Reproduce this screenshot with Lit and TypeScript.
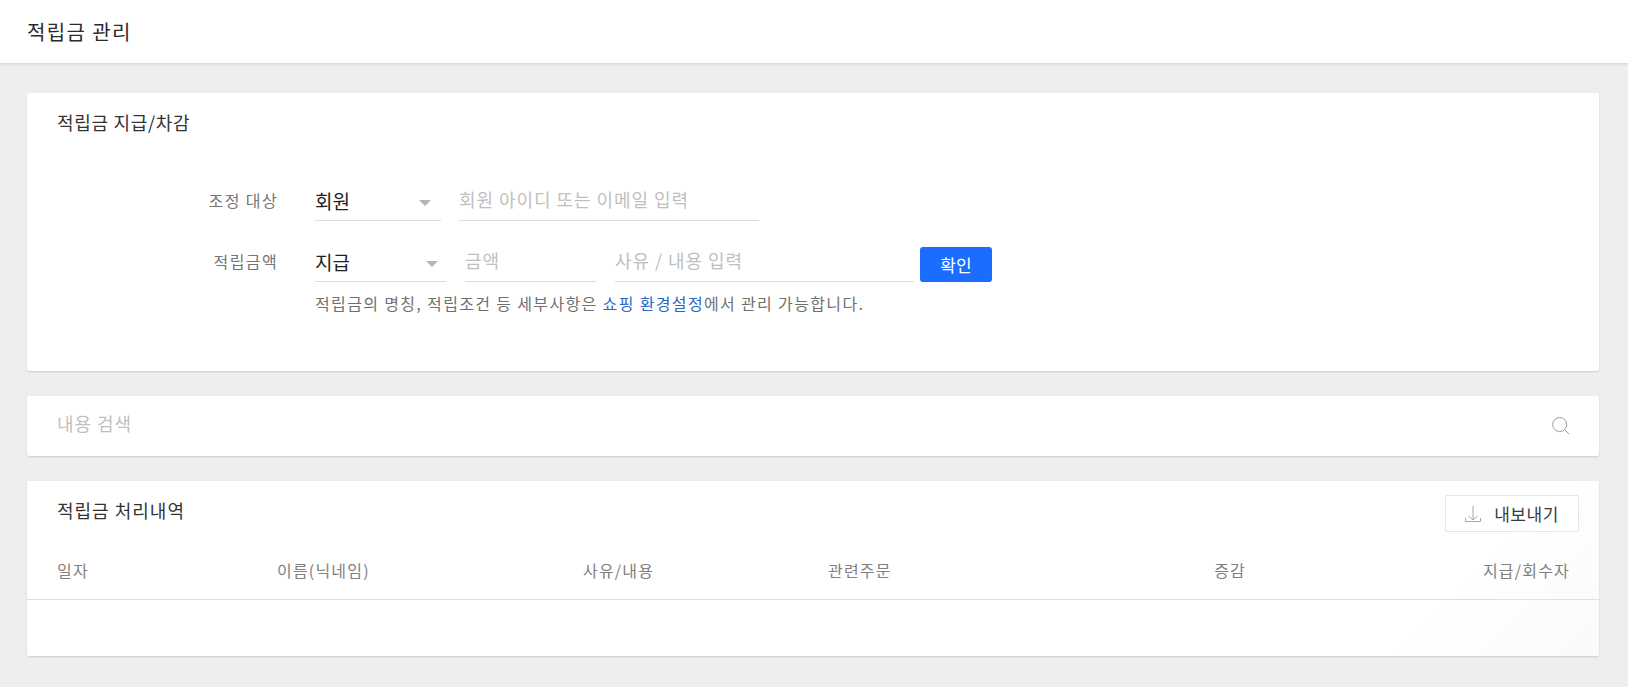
import { LitElement, html, css } from "lit";
import { customElement } from "lit/decorators.js";

@customElement("app-root")
export class AppRoot extends LitElement {
  static styles = css`
    :host {
      display: block;
      height: 687px;
      overflow: hidden;
      background: #eeeeee;
      font-family: "Noto Sans CJK KR", "Noto Sans", sans-serif;
      color: #2b2b2b;
      font-size: 16px;
    }
    * { box-sizing: border-box; }
    header {
      height: 63px;
      background: #fff;
      box-shadow: 0 1px 3px rgba(0, 0, 0, 0.12);
      padding-left: 27px;
      display: flex;
      align-items: center;
      font-size: 20px;
      letter-spacing: 1.4px;
      position: relative;
    }
    main {
      padding: 30px 29px 0 27px;
      display: flex;
      flex-direction: column;
      gap: 25px;
    }
    .card {
      background: #fff;
      border-radius: 2px;
      box-shadow: 0 1px 2px rgba(0, 0, 0, 0.14);
    }
    .c1 { height: 278px; padding: 17px 30px 0; }
    h2 {
      margin: 0;
      font-size: 18px;
      font-weight: 400;
      line-height: 24px;
      letter-spacing: 0.7px;
      color: #333;
    }
    .c3top h2 { letter-spacing: 1px; }
    .form {
      margin-top: 48px;
      display: flex;
      flex-direction: column;
      gap: 22px;
    }
    .row { display: flex; align-items: flex-end; }
    .lbl {
      width: 221px;
      text-align: right;
      color: #757575;
      font-size: 16px;
      letter-spacing: 1.4px;
      line-height: 36px;
      height: 39px;
    }
    .fields { margin-left: 37px; display: flex; align-items: flex-end; gap: 18px; }
    .fields.wide { gap: 19px; }
    .sel {
      height: 39px;
      border-bottom: 1px solid #dcdcdc;
      display: flex;
      align-items: center;
      justify-content: space-between;
      font-size: 19px;
      color: #212121;
      padding-bottom: 2px;
      padding-right: 8px;
    }
    .sel.a { width: 126px; padding-right: 10px; }
    .sel.b { width: 131px; }
    .arrow {
      width: 0;
      height: 0;
      border-left: 6px solid transparent;
      border-right: 6px solid transparent;
      border-top: 6px solid #b5b5b5;
      margin-top: 5px;
    }
    input {
      height: 39px;
      border: 0;
      border-bottom: 1px solid #dcdcdc;
      outline: 0;
      padding: 0 0 5px;
      font: inherit;
      font-size: 18px;
      letter-spacing: 0.95px;
      background: transparent;
      color: #212121;
    }
    input::placeholder { color: #bfbfbf; opacity: 1; }
    .i1 { width: 300px; }
    .i2 { width: 131px; }
    .i3 { width: 299px; }
    .confirm {
      width: 72px;
      height: 35px;
      margin: 0 0 0 -13px;
      border: 0;
      border-radius: 3px;
      background: #1a6dff;
      color: #fff;
      font: inherit;
      font-size: 17px;
    }
    .help {
      margin: 10px 0 0 258px;
      color: #707070;
      font-size: 16px;
      letter-spacing: 1.35px;
      line-height: 22px;
    }
    .help a { color: #2a66c8; text-decoration: none; }
    .c2 {
      height: 60px;
      display: flex;
      align-items: center;
      justify-content: space-between;
      padding: 0 29px 0 30px;
    }
    .c2 input {
      border: 0;
      flex: 1;
      padding-bottom: 7px;
    }
    .c2 svg { display: block; }
    .c3 {
      height: 175px;
      background: linear-gradient(135deg, #fff 88%, #fafafa 100%);
    }
    .c3top {
      height: 70px;
      padding: 17px 20px 0 30px;
      display: flex;
      justify-content: space-between;
      align-items: flex-start;
    }
    .export {
      width: 134px;
      height: 37px;
      margin-top: -3px;
      border: 1px solid #e5e5e5;
      border-radius: 2px;
      background: #fff;
      color: #3a3a3a;
      font: inherit;
      font-size: 17px;
      letter-spacing: 0.5px;
      display: flex;
      align-items: center;
      justify-content: center;
      gap: 13px;
      padding: 0;
    }
    .thead {
      height: 49px;
      padding: 0 29px 11px 30px;
      display: grid;
      grid-template-columns: 220px 306px 245px 1fr 80px 324px;
      align-items: center;
      border-bottom: 1px solid #e0e0e0;
      color: #808080;
      font-size: 16px;
      letter-spacing: 1.2px;
    }
    .r { text-align: right; }
  `;

  render() {
    return html`
      <header>적립금 관리</header>
      <main>
        <section class="card c1">
          <h2>적립금 지급/차감</h2>
          <div class="form">
            <div class="row">
              <div class="lbl">조정 대상</div>
              <div class="fields">
                <div class="sel a">회원<span class="arrow"></span></div>
                <input class="i1" placeholder="회원 아이디 또는 이메일 입력" />
              </div>
            </div>
            <div class="row">
              <div class="lbl">적립금액</div>
              <div class="fields wide">
                <div class="sel b">지급<span class="arrow"></span></div>
                <input class="i2" placeholder="금액" />
                <input class="i3" placeholder="사유 / 내용 입력" />
                <button class="confirm">확인</button>
              </div>
            </div>
          </div>
          <p class="help">적립금의 명칭, 적립조건 등 세부사항은 <a href="#">쇼핑 환경설정</a>에서 관리 가능합니다.</p>
        </section>
        <section class="card c2">
          <input placeholder="내용 검색" />
          <svg width="18" height="18" viewBox="0 0 18 18" fill="none" stroke="#9a9a9a" stroke-width="1">
            <circle cx="7.7" cy="7.5" r="7" />
            <path d="M12.8 12.8l4.4 4.4" />
          </svg>
        </section>
        <section class="card c3">
          <div class="c3top">
            <h2>적립금 처리내역</h2>
            <button class="export">
              <svg width="16" height="16" viewBox="0 0 16 16" fill="none" stroke="#a8a8a8" stroke-width="1">
                <path d="M8 0v14M3.5 10l4.5 4 4.5-4M.5 12v3.5h15V12" />
              </svg>
              <span>내보내기</span>
            </button>
          </div>
          <div class="thead">
            <div>일자</div>
            <div>이름(닉네임)</div>
            <div>사유/내용</div>
            <div>관련주문</div>
            <div class="r">증감</div>
            <div class="r">지급/회수자</div>
          </div>
        </section>
      </main>
    `;
  }
}
